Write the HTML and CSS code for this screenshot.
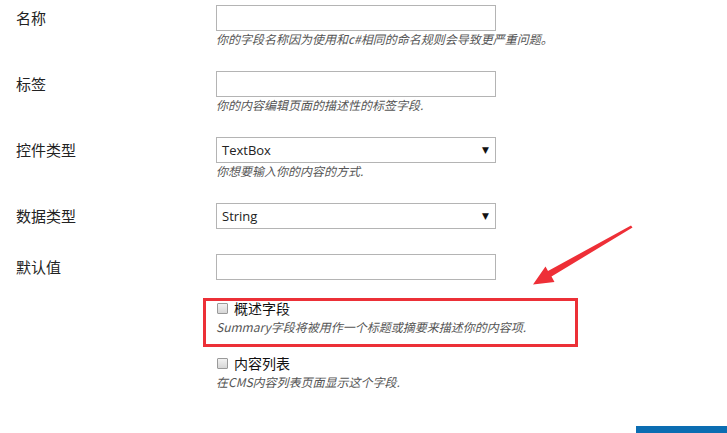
FILE: index.html
```html
<!DOCTYPE html>
<html lang="zh-CN">
<head>
<meta charset="utf-8">
<title>字段编辑</title>
<link rel="stylesheet" href="styles.css">
</head>
<body>
<div class="page">
  <form class="form">
    <div class="row">
      <label class="label">名称</label>
      <div class="field">
        <input class="input" type="text">
        <div class="hint">你的字段名称因为使用和c#相同的命名规则会导致更严重问题。</div>
      </div>
    </div>
    <div class="row">
      <label class="label">标签</label>
      <div class="field">
        <input class="input" type="text">
        <div class="hint">你的内容编辑页面的描述性的标签字段.</div>
      </div>
    </div>
    <div class="row">
      <label class="label">控件类型</label>
      <div class="field">
        <div class="select"><span class="select-text">TextBox</span><span class="caret">▼</span></div>
        <div class="hint">你想要输入你的内容的方式.</div>
      </div>
    </div>
    <div class="row">
      <label class="label">数据类型</label>
      <div class="field">
        <div class="select"><span class="select-text">String</span><span class="caret">▼</span></div>
      </div>
    </div>
    <div class="row">
      <label class="label">默认值</label>
      <div class="field">
        <input class="input" type="text">
      </div>
    </div>
    <div class="checks">
      <div class="check">
        <label class="check-line"><span class="box"></span><span>概述字段</span></label>
        <div class="hint">Summary字段将被用作一个标题或摘要来描述你的内容项.</div>
      </div>
      <div class="check">
        <label class="check-line"><span class="box"></span><span>内容列表</span></label>
        <div class="hint">在CMS内容列表页面显示这个字段.</div>
      </div>
    </div>
    <div class="actions"><div class="btn"></div></div>
  </form>
  <div class="highlight"></div>
  <svg class="arrow" width="727" height="433" viewBox="0 0 727 433">
    <polygon points="631,225.5 548,271 545.5,266.5 533,284.5 554.5,282 551.5,276.5 632.5,227.5" fill="#ee2f37"/>
  </svg>
</div>
</body>
</html>
```
FILE: styles.css
```css
html, body {
  margin: 0;
  padding: 0;
  background: #fff;
}
.page {
  position: relative;
  width: 727px;
  height: 433px;
  overflow: hidden;
  font-family: "Noto Sans CJK SC", "Open Sans", sans-serif;
  color: #222;
}
.form {
  padding: 5px 0 0 16px;
}
.row {
  display: grid;
  grid-template-columns: 200px 280px;
  margin-bottom: 25px;
}
.label {
  font-size: 15px;
  line-height: 26px;
  height: 26px;
  color: #222;
}
.field {
  display: flex;
  flex-direction: column;
}
.input {
  box-sizing: border-box;
  width: 280px;
  height: 26px;
  margin: 0;
  border: 1px solid #b4b4b4;
  background: #fff;
  outline: none;
}
.select {
  box-sizing: border-box;
  width: 280px;
  height: 26px;
  border: 1px solid #b4b4b4;
  display: flex;
  align-items: center;
  justify-content: space-between;
  padding: 0 6px 0 5px;
  font-family: "Open Sans", sans-serif;
  font-size: 13px;
  color: #222;
}
.select-text {
  line-height: 24px;
}
.caret {
  font-size: 9px;
  color: #111;
  font-family: "DejaVu Sans", sans-serif;
}
.hint {
  font-size: 12px;
  line-height: 15px;
  height: 15px;
  font-style: italic;
  color: #555;
  white-space: nowrap;
}
.checks {
  margin-left: 200px;
  margin-top: -7px;
}
.check {
  margin-bottom: 19px;
}
.check-line {
  display: flex;
  align-items: center;
  gap: 6px;
  font-size: 14px;
  line-height: 20px;
  margin-bottom: 1px;
  color: #111;
}
.box {
  box-sizing: border-box;
  width: 11px;
  height: 11px;
  margin-left: 1px;
  border: 1px solid #9a9a9a;
  background: linear-gradient(#f2f2f2, #d6d6d6);
  border-radius: 1px;
}
.actions {
  display: flex;
  padding-top: 18px;
}
.btn {
  margin-left: 620px;
  width: 100px;
  height: 30px;
  background: #0b6db2;
}
.highlight {
  position: absolute;
  left: 203px;
  top: 298px;
  width: 375px;
  height: 49px;
  box-sizing: border-box;
  border: 3px solid #ec3037;
}
.arrow {
  position: absolute;
  left: 0;
  top: 0;
  pointer-events: none;
}
```
